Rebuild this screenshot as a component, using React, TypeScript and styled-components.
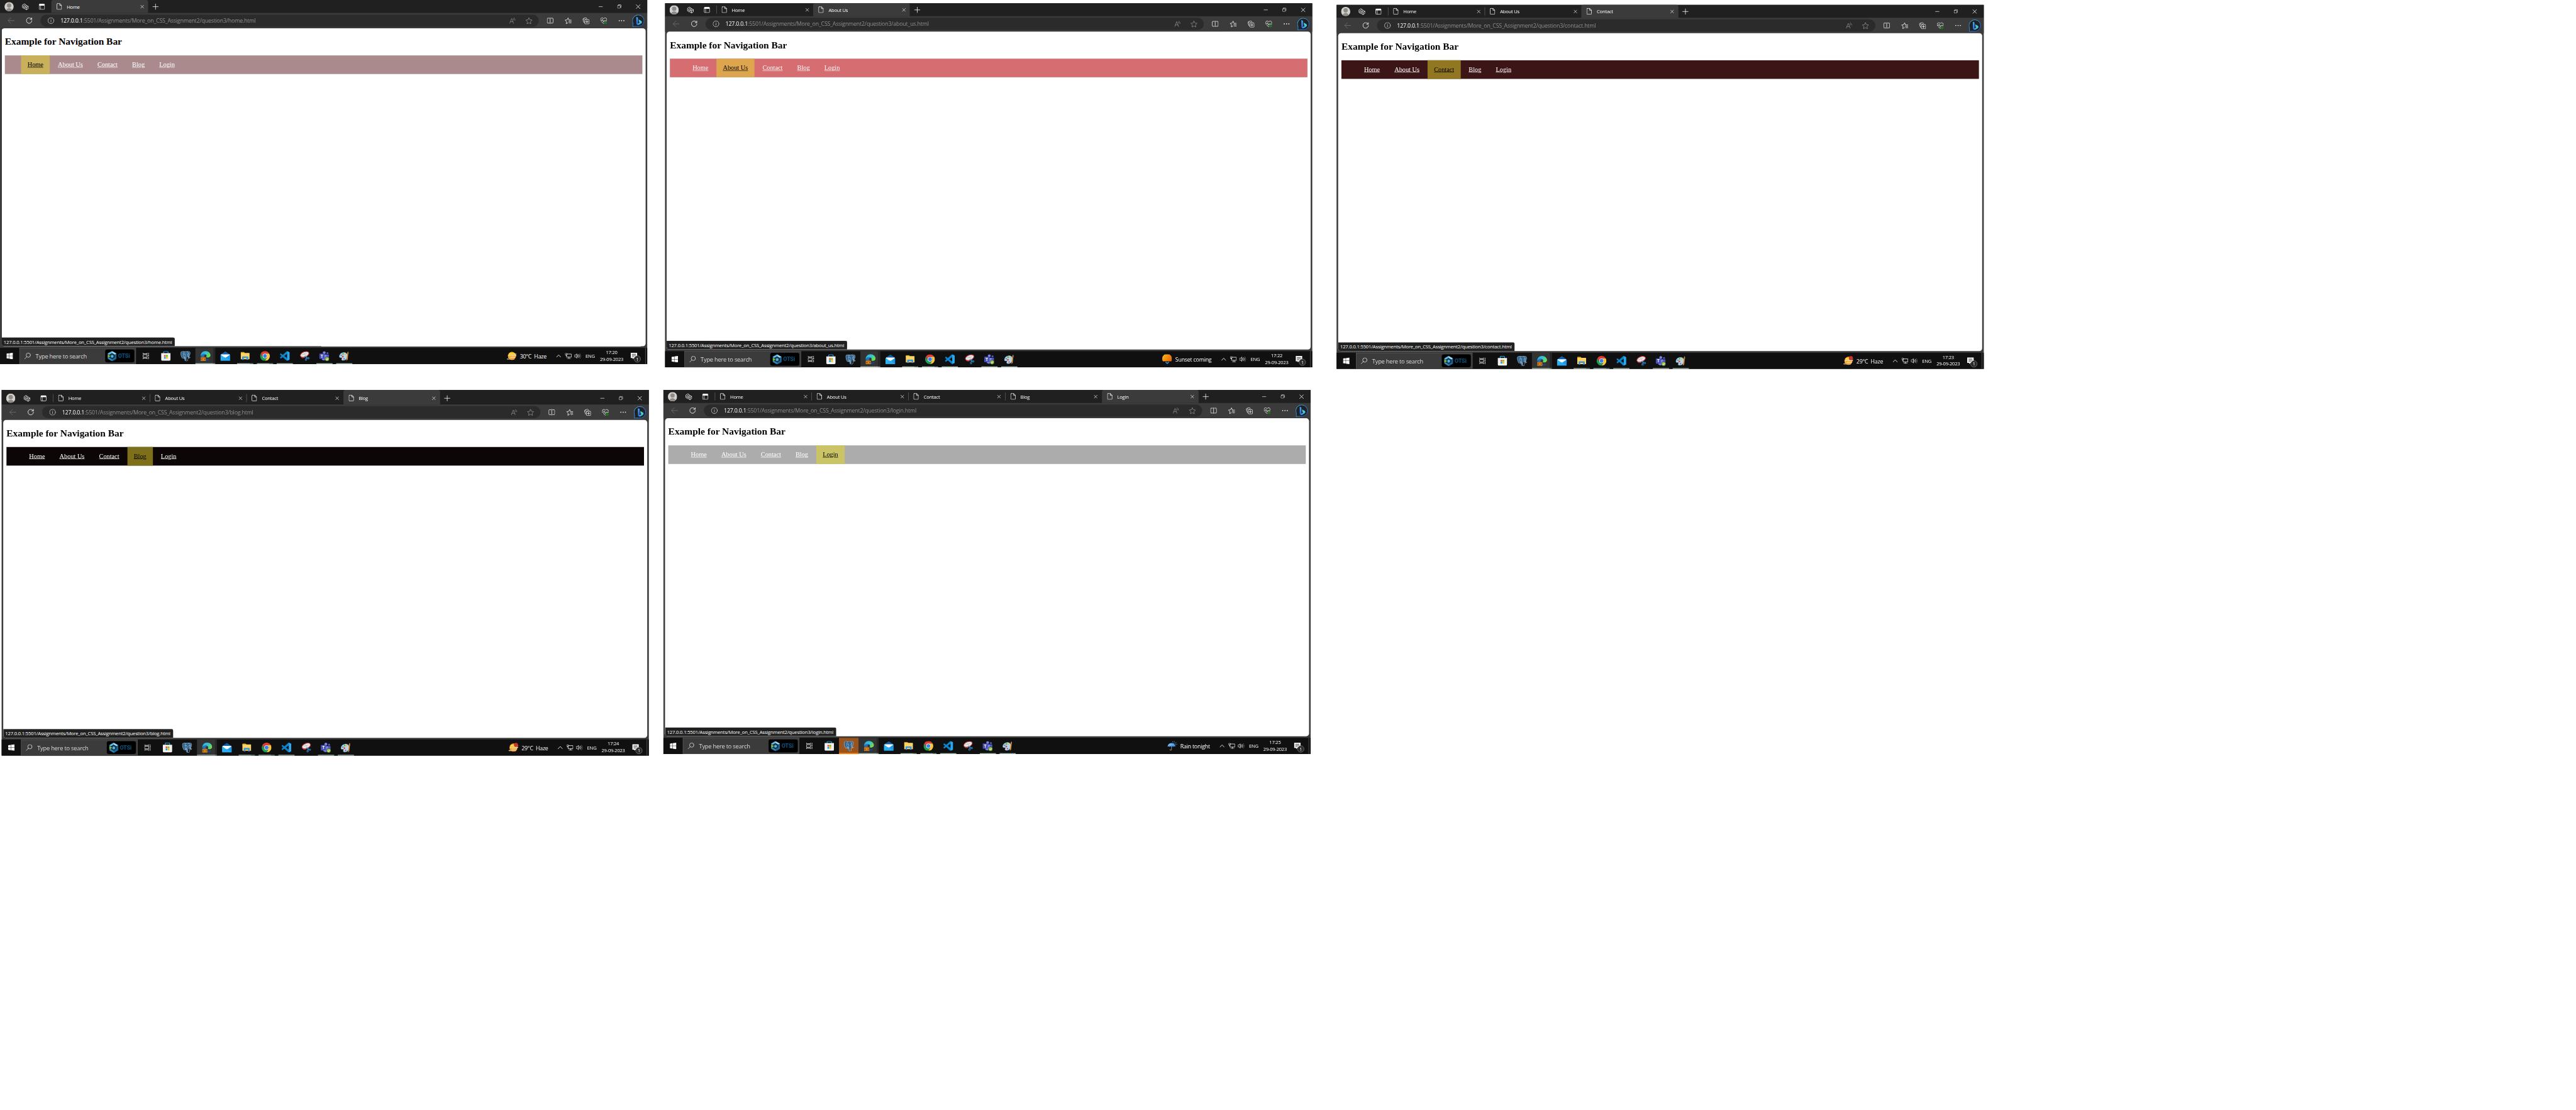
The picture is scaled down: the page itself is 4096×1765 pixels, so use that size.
import React from "react";
import styled, { createGlobalStyle, css } from "styled-components";
import { SiPostgresql } from "react-icons/si";

const UI = `"Open Sans", "Noto Sans", sans-serif`;

const GlobalStyle = createGlobalStyle`
  body { margin: 0; background: #fff; overflow: hidden; }
  * { box-sizing: border-box; }
  svg { display: block; flex: none; }
`;

const Viewport = styled.div`
  width: 4096px;
  height: 1765px;
  overflow: hidden;
  background: #fff;
`;

const Board = styled.main`
  width: 6368px;
  height: 2744px;
  transform: scale(0.64322);
  transform-origin: 0 0;
  display: flex;
  flex-direction: column;
  align-items: flex-start;
  gap: 52px;
  font-family: ${UI};
  letter-spacing: -0.02em;
`;

const ShotRow = styled.div<{ $left: number }>`
  display: flex;
  align-items: flex-start;
  padding-left: ${(p) => p.$left}px;
`;

const Shot = styled.section<{ $top: number; $left: number; $lead: number }>`
  width: 1600px;
  height: ${(p) => 900 + p.$lead}px;
  margin: ${(p) => p.$top}px 0 0 ${(p) => p.$left}px;
  display: flex;
  flex-direction: column;
  background: #3b3b3b;
`;

/* ---------- browser chrome ---------- */

const Slot = styled.div<{ $w: number }>`
  width: ${(p) => p.$w}px;
  height: 100%;
  flex: none;
  display: flex;
  align-items: center;
  justify-content: center;
`;

const TabStrip = styled.header<{ $lead: number }>`
  height: ${(p) => 32 + p.$lead}px;
  padding-top: ${(p) => p.$lead}px;
  flex: none;
  display: flex;
  align-items: stretch;
  background: #202020;
  box-shadow: inset 0 -1px 0 #1a1a1a;
`;

const TabItem = styled.div<{ $active: boolean; $lead: number }>`
  width: 239.2px;
  margin-top: ${(p) => -p.$lead}px;
  padding: ${(p) => p.$lead}px 0 0 13px;
  display: flex;
  align-items: center;
  color: #fff;
  font-size: 11.8px;
  background: ${(p) => (p.$active ? "#3b3b3b" : "transparent")};
  border-radius: ${(p) => (p.$active ? "5px 5px 0 0" : "0")};
  background-image: ${(p) =>
    p.$active ? "none" : "linear-gradient(#686868, #686868)"};
  background-size: 1px 20px;
  background-position: 0 ${(p) => 6 + p.$lead}px;
  background-repeat: no-repeat;
`;

const TabTitle = styled.span`
  flex: 1;
  padding: 0 0 1px 12px;
  white-space: nowrap;
`;

const Spacer = styled.div`
  flex: 1;
`;

const Toolbar = styled.div`
  height: 38px;
  flex: none;
  padding-right: 2px;
  display: flex;
  align-items: center;
  background: #3b3b3b;
`;

const AddressBar = styled.div`
  flex: 1;
  height: 30px;
  margin: 0 6px 0 11.5px;
  padding: 0 5px 0 18.5px;
  border-radius: 15px;
  background: #2b2b2b;
  display: flex;
  align-items: center;
`;

const Url = styled.div`
  flex: 1;
  padding-left: 15.5px;
  font-size: 13.75px;
  line-height: 18px;
  color: #8d8d8d;
  white-space: nowrap;
`;

const Host = styled.span`
  color: #fff;
`;

/* ---------- page ---------- */

const PageArea = styled.div`
  position: relative;
  flex: 1;
  margin: 0 4px 4px;
  padding: 0 8px;
  border-radius: 7px;
  background: #fff;
  font-family: "Liberation Serif", serif;
  letter-spacing: 0;
  color: #000;
  overflow: hidden;
`;

const Heading = styled.h2`
  margin: 20px 0;
  font-size: 24px;
  line-height: 27px;
  font-weight: 700;
`;

const NavBar = styled.nav<{ $bg: string }>`
  height: 46px;
  padding-left: 40px;
  display: flex;
  gap: 4px;
  background: ${(p) => p.$bg};
`;

const NavLink = styled.a<{ $hl?: string }>`
  padding: 0 16px;
  font-size: 16px;
  line-height: 46px;
  text-decoration: underline;
  color: ${(p) => (p.$hl ? "#000" : "#fff")};
  background: ${(p) => p.$hl || "transparent"};
`;

const StatusBubble = styled.div`
  position: absolute;
  left: 0;
  bottom: 0;
  height: 22px;
  padding: 0 7px 0 5px;
  border-radius: 0 4px 0 6px;
  border-top: 1px solid #35403b;
  background: #202020;
  color: #fff;
  font-family: ${UI};
  letter-spacing: -0.02em;
  font-size: 11.8px;
  line-height: 21px;
  white-space: nowrap;
`;

/* ---------- taskbar ---------- */

const Taskbar = styled.footer`
  height: 40px;
  flex: none;
  display: flex;
  align-items: stretch;
  background: #101010;
  color: #fff;
`;

const SearchBox = styled.div`
  width: 288px;
  display: flex;
  align-items: center;
  padding: 0 3px 0 11px;
  border: 1px solid #5c5c5c;
  border-bottom-color: #505050;
  background: #3b3b3b;
  color: #dcdcdc;
  font-size: 14.4px;
`;

const SearchText = styled.span`
  flex: 1;
  padding-left: 12px;
  white-space: nowrap;
`;

const SearchBadge = styled.div`
  width: 72px;
  height: 32px;
  border-radius: 5px;
  background: #000;
  display: flex;
  align-items: center;
  padding-left: 6px;
  gap: 4px;
  color: #0d4b72;
  font-family: Roboto, sans-serif;
  font-weight: 900;
  font-size: 14px;
`;

type AppState = "idle" | "open" | "stacked" | "active" | "alert";

const AppButton = styled.div<{ $state: AppState }>`
  width: 49px;
  height: 40px;
  display: flex;
  align-items: center;
  justify-content: center;
  background-repeat: no-repeat;
  ${(p) =>
    p.$state === "active" &&
    css`
      background-color: #333;
      background-image: linear-gradient(90deg, #a9c3b3 44px, #86a092 44px),
        linear-gradient(90deg, transparent 44px, #262626 44px);
      background-size: 100% 2px, 100% 100%;
      background-position: 0 100%, 0 0;
    `}
  ${(p) =>
    (p.$state === "open" || p.$state === "stacked") &&
    css`
      background-image: linear-gradient(
        90deg,
        #a9c3b3 31px,
        ${p.$state === "stacked" ? "#7b9386" : "#a9c3b3"} 31px
      );
      background-size: 40px 2px;
      background-position: 4.5px 100%;
    `}
  ${(p) =>
    p.$state === "alert" &&
    css`
      background-color: #99531d;
      background-image: linear-gradient(#ff7a00, #ff7a00);
      background-size: 100% 3px;
      background-position: 0 100%;
    `}
`;

const Weather = styled.div`
  display: flex;
  align-items: center;
  gap: 8px;
  padding-right: 18px;
  font-size: 13.7px;
  white-space: pre;
`;

const Language = styled(Slot)`
  font-size: 11.8px;
`;

const Clock = styled.div`
  width: 68px;
  display: flex;
  flex-direction: column;
  align-items: center;
  padding-top: 2px;
  font-size: 11.7px;
  line-height: 17px;
`;

const Notifications = styled(Slot)`
  position: relative;
`;

const Badge = styled.span`
  position: absolute;
  left: 21px;
  top: 19px;
  width: 17px;
  height: 17px;
  border-radius: 50%;
  border: 1px solid #8a8a8a;
  background: #2a2a2a;
  font-size: 11px;
  line-height: 15px;
  text-align: center;
`;

const ShowDesktop = styled.div`
  width: 5px;
  border-left: 1px solid #6e6e6e;
`;

/* ---------- icons ---------- */

type LineProps = { w?: number; h?: number; c?: string; s?: number; box?: string; children: React.ReactNode };
const Line = ({ w = 16, h = 16, c = "#fff", s = 1.2, box, children }: LineProps) => (
  <svg width={w} height={h} viewBox={box || `0 0 ${w} ${h}`} fill="none" stroke={c} strokeWidth={s} strokeLinecap="round" strokeLinejoin="round">
    {children}
  </svg>
);

const Avatar = () => (
  <svg width="23" height="23" viewBox="0 0 24 24">
    <defs><clipPath id="av"><circle cx="12" cy="12" r="12" /></clipPath></defs>
    <g clipPath="url(#av)">
      <rect width="24" height="24" fill="#d3d1ce" />
      <circle cx="12" cy="9" r="5.6" fill="#8f8b85" />
      <path d="M4 24c0-5 3.500-8 8-8s8 3 8 8z" fill="#8f8b85" />
    </g>
  </svg>
);

const Workspaces = () => (
  <Line w={17} h={17}>
    <path d="M8 8.500l4.500-2.500 3.500 2v5l-4.500 3-3.500-2z M8 8.500l3.500 2 4.500-2.500 M11.500 10.500v5.500" />
    <path d="M5.500 13.500l-1-.6V6.500L9 4l2.500 1.200 M2.500 11.500l-1-.6V4.500L6 1.500l2.700 1.300" />
  </Line>
);

const TabActions = () => (
  <svg width="15" height="15" viewBox="0 0 15 15">
    <rect x=".8" y=".8" width="13.400" height="13.400" rx="2" fill="none" stroke="#fff" strokeWidth="1.200" />
    <path d="M1 2.500a1.800 1.800 0 0 1 1.800-1.800h9.400a1.800 1.800 0 0 1 1.800 1.800v2.300H1z" fill="#fff" />
    <path d="M4.500 4v10" stroke="#fff" />
  </svg>
);

const PageIcon = () => (
  <Line w={13} h={16}>
    <path d="M2.200.7h5.600l4.400 4.500v8.600a1.500 1.500 0 0 1-1.500 1.500H2.200A1.500 1.500 0 0 1 .7 13.800V2.200A1.500 1.500 0 0 1 2.200.7z M7.700.9v4.400h4.300" />
  </Line>
);

const Close = ({ size = 9 }: { size?: number }) => (
  <Line w={size} h={size} box="0 0 9 9" s={1}><path d="M.5.5l8 8M8.500.5l-8 8" /></Line>
);
const Plus = () => <Line w={15} h={15}><path d="M7.500.5v14M.5 7.500h14" /></Line>;
const Minimize = () => <Line w={10} h={10} s={1}><path d="M0 5.500h10" /></Line>;
const Restore = () => (
  <Line w={10} h={10} s={1}>
    <rect x=".5" y="2.500" width="7" height="7" rx="1.500" />
    <path d="M2.700.5H7a2.500 2.500 0 0 1 2.500 2.500v4.300" />
  </Line>
);
const Back = () => <Line w={17} h={16} c="#757575"><path d="M16 8H1M8 1L1 8l7 7" /></Line>;
const Refresh = () => (
  <Line s={1.300}>
    <path d="M14.700 8A6.700 6.900 0 1 1 12.500 2.700L14.500 4.500M14.600.6v4.200h-4.200" />
  </Line>
);
const Info = () => (
  <Line c="#d6d6d6">
    <circle cx="8" cy="8" r="7.300" /><path d="M8 7.200v4.200M8 4.700v.2" />
  </Line>
);
const ReadAloud = () => (
  <Line c="#8b8b8b" w={16} h={16}>
    <path d="M1 14.700L5.800 2.500 10.500 14.700M2.500 10.700h6.600M9.500 3.500a5 5 0 0 1 1.500 3.300M11.200 1a8.500 8.500 0 0 1 3.300 6" />
  </Line>
);
const Star = () => (
  <Line c="#8b8b8b" w={17} h={17} box="0 0 16 16">
    <path d="M8 .8l2.200 4.700 5.100.7-3.700 3.600.9 5.200L8 12.500 3.500 15l.9-5.200L.7 6.200l5.100-.7z" />
  </Line>
);
const Split = () => (
  <Line w={16} h={16}>
    <path d="M8 .5v15M5.700 2H2A1.400 1.400 0 0 0 .7 3.400v9.200A1.400 1.400 0 0 0 2 14h3.700M10.300 2H14a1.400 1.400 0 0 1 1.300 1.400v9.200A1.400 1.400 0 0 1 14 14h-3.700" />
  </Line>
);
const Favorites = () => (
  <Line w={17} h={17}>
    <path d="M10.500 6.500L8.300 1.200 6 6l-5.200.8 3.800 3.600L3.700 15.700 8 13.300M11 6.700h5.300M10 10h6.300M11 13.300h5.300" />
  </Line>
);
const Collections = () => (
  <Line w={17} h={17}>
    <rect x="5.500" y="5.500" width="10.800" height="10.800" rx="2" />
    <path d="M10.900 8v5.800M8 10.900h5.800M3.600 12.500L.9 5.300A2 2 0 0 1 2 2.800L7.500.8a2 2 0 0 1 2.500 1l.5 1.500M3.600 3.900l-.4 1.600" />
  </Line>
);
const Essentials = () => (
  <svg width="17" height="17" viewBox="0 0 17 17" fill="none" stroke="#fff" strokeWidth="1.200" strokeLinejoin="round">
    <path d="M1.200 6.200C.3 3.500 2 1 4.600 1 6.300 1 7.500 2 8.300 3.200 9 2 10.300 1 12 1c2.600 0 4.300 2.500 3.500 5.200M.3 8h3.500l1.700-3 2.800 6.200L10.500 7.500l1 .8h5M3 10.300l5.300 5 1.200-1.200" />
    <circle cx="12.800" cy="13" r="3.700" fill="#1d7a22" stroke="none" />
    <path d="M11 13.300l1.200 1 2.200-2.500" stroke="#3b3b3b" strokeWidth=".8" />
  </svg>
);
const Dots = () => (
  <svg width="15" height="4" viewBox="0 0 15 4" fill="#fff">
    <circle cx="1.800" cy="2" r="1.300" /><circle cx="7.500" cy="2" r="1.300" /><circle cx="13.200" cy="2" r="1.300" />
  </svg>
);
const Bing = () => (
  <svg width="31" height="31" viewBox="0 0 31 31">
    <defs>
      <linearGradient id="bg1" x1="0" y1="0" x2="1" y2="1"><stop offset="0" stopColor="#45c4ee" /><stop offset="1" stopColor="#1c50d8" /></linearGradient>
      <linearGradient id="bg2" x1="0" y1="0" x2="0" y2="1"><stop offset="0" stopColor="#4fb5f2" /><stop offset="1" stopColor="#1b5ee8" /></linearGradient>
      <linearGradient id="bg3" x1="1" y1="0" x2="0" y2="1"><stop offset="0" stopColor="#4ee0c8" /><stop offset="1" stopColor="#3a9cf5" /></linearGradient>
    </defs>
    <path d="M15.500 1A14.300 14.300 0 1 1 12 29.300C8 28.800 4.500 29.500 1 30c1-2.500.8-6 .6-9A14.400 14.400 0 0 1 15.500 1z" fill="#1e2226" stroke="url(#bg1)" strokeWidth="1.500" />
    <path d="M10 5.500l4 2v13l-1 4.500-3-2.300z" fill="url(#bg2)" />
    <path d="M15.500 12l6 3.200c3 1.700 3 5 .3 6.700l-5 3.200c-2.600 1.200-5.500 0-6.100-2.700 1.200.8 2.200.8 3.600 0l4-2.300-1.500-1.900z" fill="url(#bg3)" />
  </svg>
);

const Windows = () => (
  <svg width="16" height="16" viewBox="0 0 16 16" fill="#fff">
    <path d="M0 2.300l6.500-.9v6.200H0zM7.300 1.300L16 0v7.600H7.300zM0 8.400h6.500v6.200L0 13.700zM7.300 8.400H16V16l-8.700-1.200z" />
  </svg>
);
const Search = () => <Line c="#e6e6e6" s={1.200}><circle cx="10" cy="6" r="5.300" /><path d="M6.300 9.800L.6 15.500" /></Line>;
const OtsiLogo = () => (
  <svg width="22" height="25" viewBox="0 0 22 25">
    <path d="M11 0l11 6.300v12.400L11 25 0 18.700V6.300z" fill="#2d86b8" />
    <path d="M11 0l11 6.300-4.500 2.500L11 5z" fill="#9ad8f2" />
    <path d="M11 0L0 6.300l4.500 2.500L11 5z" fill="#5fb9e2" />
    <path d="M22 6.300v12.400L11 25v-4.500l6.500-3.800V8.800z" fill="#1b6494" />
    <path d="M11 5.800l6 3.400v6.600l-6 3.400-6-3.400V9.200z" fill="#173a52" stroke="#03121c" strokeWidth="1.200" />
    <path d="M11 9l3.500 2v3.700L11 16.700l-3-2V11z" fill="#58aed6" />
    <path d="M0 7.500l8 5-8 5z" fill="#7fc241" stroke="#03121c" strokeWidth=".6" />
  </svg>
);
const TaskView = () => (
  <svg width="16" height="16" viewBox="0 0 16 16" fill="none" stroke="#fff" strokeWidth="1.200">
    <path d="M.6 0v2.600h10V0M.6 16v-2.600h10V16M.6 4.800h10v6.400H.6zM14.200 0v4M14.200 9v7" />
    <rect x="13.200" y="5" width="2" height="2.600" fill="#fff" stroke="none" />
  </svg>
);
const Store = () => (
  <svg width="24" height="24" viewBox="0 0 24 24">
    <path d="M6.500 6V2.500A1.800 1.800 0 0 1 8.300.7h7.400a1.800 1.800 0 0 1 1.800 1.800V6" fill="none" stroke="#1aa7ea" strokeWidth="1.700" />
    <path d="M.5 5h23v16a3 3 0 0 1-3 3h-17a3 3 0 0 1-3-3z" fill="#f1f1f1" />
    <path d="M7.500 9.500h4.200v4.200H7.500z" fill="#f25022" /><path d="M12.500 9.500h4.200v4.200h-4.200z" fill="#7fba00" />
    <path d="M7.500 14.500h4.200v4.200H7.500z" fill="#00a4ef" /><path d="M12.500 14.500h4.200v4.200h-4.200z" fill="#ffb900" />
  </svg>
);
const PgWrap = styled.div`
  display: grid;
  > * { grid-area: 1 / 1; }
`;
const Postgres = () => (
  <PgWrap>
    <svg width="25" height="25" viewBox="0 0 24 24">
      <path d="M4.500.8C1.500 1.300.4 4 .8 7.500c.4 3.500 2 8 3.600 8.500 1 .3 1.500-.5 2.300-1.300l2 .6.600 6c.5 2.500 4.500 2.400 5.300 0l.6-6.600 4.500.3c2-.4 3.200-1.200 3.300-2l-2.500-.3c2-3 3-7.500 2-9.500C20.500.7 17 .3 14.500 1.200 11 .4 8 0 4.500.8z" fill="#336791" />
    </svg>
    <SiPostgresql size={25} color="#b9cede" />
  </PgWrap>
);
const Edge = () => (
  <svg width="26" height="26" viewBox="0 0 26 26">
    <defs>
      <linearGradient id="ed1" x1="0" y1="0" x2="1" y2=".5"><stop offset="0" stopColor="#2fa8e0" /><stop offset=".55" stopColor="#35c1d8" /><stop offset="1" stopColor="#6be04b" /></linearGradient>
      <linearGradient id="ed2" x1="0" y1="0" x2="0" y2="1"><stop offset="0" stopColor="#1b86d8" /><stop offset="1" stopColor="#0d3f86" /></linearGradient>
    </defs>
    <path d="M1 13C1 6 6 .8 13 .8S25.300 6 25.300 11c0 3.800-3 6-6.300 6-2.500 0-4.500-.9-4-2 .9-1.300 1-3 .2-4.300C12 6.500 4 7.500 1 13z" fill="url(#ed1)" />
    <path d="M1 13C3.500 7.500 10 6.300 14 9.300 9.500 9.500 8 14 10 17.500c2.300 4 8.500 4.700 13.700 2.400-2 3.500-6 5.600-10.500 5.600C6 25.500 1 20 1 13z" fill="url(#ed2)" />
    <rect x="1" y="16.500" width="13" height="9" rx="1" fill="#c9761a" /><path d="M1 20.500h13v1H1z" fill="#7a430c" />
    <path d="M5 16.500V14.700h5v1.800" fill="none" stroke="#b06512" strokeWidth="1.300" /><path d="M6.700 20h1.700v2.500H6.700z" fill="#ffc85a" />
  </svg>
);
const Mail = () => (
  <svg width="24" height="24" viewBox="0 0 24 24">
    <path d="M0 8.500L12 .5l12 8V24H0z" fill="#0f5fa8" /><path d="M1.500 8h21v10h-21z" fill="#fff" />
    <path d="M0 8.500L12 17 0 24z" fill="#2cb3f3" /><path d="M24 8.500L12 17l12 7z" fill="#1a97e6" />
    <path d="M0 24l10-9 2 1.500 2-1.500 10 9z" fill="#29a9ee" />
  </svg>
);
const Files = () => (
  <svg width="22" height="20" viewBox="0 0 22 20">
    <path d="M0 1a1 1 0 0 1 1-1h7l2 2v3H0z" fill="#e8a310" /><path d="M0 2.500h21a1 1 0 0 1 1 1V18H0z" fill="#fdd461" />
    <path d="M3.500 19.500v-7a1.500 1.500 0 0 1 1.500-1.500h12a1.500 1.500 0 0 1 1.500 1.500v7h-4V15h-7v4.500z" fill="#3f94dc" />
  </svg>
);
const Chrome = () => (
  <svg width="24" height="24" viewBox="0 0 24 24">
    <path d="M12 6h10.400A12 12 0 0 0 1.600 6l5.200 9A6 6 0 0 1 12 6z" fill="#e33b2e" />
    <path d="M12 6h10.400A12 12 0 0 1 12 24l5.200-9A6 6 0 0 0 12 6z" fill="#fcc934" />
    <path d="M17.200 15L12 24A12 12 0 0 1 1.600 6l5.200 9a6 6 0 0 0 10.400 0z" fill="#1f9d50" />
    <circle cx="12" cy="12" r="5.900" fill="#fff" /><circle cx="12" cy="12" r="4.600" fill="#3c7ee8" />
  </svg>
);
const VsCode = () => (
  <svg width="24" height="24" viewBox="0 0 24 24">
    <path fill="#0a84cb" d="M23.150 2.587L18.210.21a1.494 1.494 0 0 0-1.705.29l-9.460 8.630-4.120-3.128a.999.999 0 0 0-1.276.057L.327 7.261A1 1 0 0 0 .326 8.740L3.899 12 .326 15.260a1 1 0 0 0 .001 1.479L1.650 17.940a.999.999 0 0 0 1.276.057l4.120-3.128 9.460 8.630a1.492 1.492 0 0 0 1.704.290l4.942-2.377A1.500 1.500 0 0 0 24 20.060V3.939a1.500 1.500 0 0 0-.85-1.352zm-5.146 14.861L10.826 12l7.178-5.448v10.896z" />
    <path fill="#2aa9f0" d="M18 .2l5.200 2.400a1.500 1.500 0 0 1 .8 1.300v16.200a1.500 1.500 0 0 1-.8 1.300L18 23.800z" />
  </svg>
);
const Snip = () => (
  <svg width="24" height="24" viewBox="0 0 24 24">
    <ellipse cx="12" cy="8" rx="11" ry="6.200" transform="rotate(-22 12 8)" fill="#e9e9e9" stroke="#cf3b3b" strokeWidth="1.600" />
    <path d="M5 9l12-3M10 5l6 8" stroke="#b5b5b5" strokeWidth="1.200" />
    <path d="M3 14c2 3 6 3.500 10 1" fill="none" stroke="#d84848" strokeWidth="1.500" />
    <g fill="none" stroke="#2e86c4" strokeWidth="1.700"><path d="M12 12.500l7 5M17.500 12l-1.500 7" /><ellipse cx="21" cy="17.300" rx="2" ry="1.800" /><ellipse cx="15.500" cy="21" rx="1.800" ry="2.200" /></g>
  </svg>
);
const TeamsLetter = styled.span`
  position: absolute;
  left: 0;
  top: 6px;
  width: 13px;
  color: #fff;
  font: 700 10px/13px ${UI};
  text-align: center;
`;
const TeamsWrap = styled.div`
  position: relative;
`;
const Teams = () => (
  <TeamsWrap>
    <svg width="25" height="25" viewBox="0 0 25 25">
      <circle cx="12.500" cy="3.700" r="3.500" fill="#7b83eb" /><circle cx="20.500" cy="5" r="2.500" fill="#5059c9" />
      <path d="M16 8.500h8v7a4 4 0 0 1-8 0z" fill="#5059c9" /><path d="M6 8.500h12V17a6 6 0 0 1-12 0z" fill="#7b83eb" />
      <rect y="6" width="13" height="13" rx="1.200" fill="#4a50b8" />
      <circle cx="19.500" cy="19.500" r="5.300" fill="#92c353" stroke="#101010" strokeWidth=".8" /><path d="M16.800 19.700l2 2 3.500-3.800" stroke="#fff" strokeWidth="1.500" fill="none" />
    </svg>
    <TeamsLetter>T</TeamsLetter>
  </TeamsWrap>
);
const Paint = () => (
  <svg width="25" height="25" viewBox="0 0 25 25">
    <path d="M10.500 3.500C17 2.500 21.500 6.500 21 12.500c-.5 6-4.500 10.500-10.500 10.500-4 0-5-2-3.500-4.500 1.200-2-.5-2.800-2.500-2.300C1.700 16.800.5 15 1 12c.8-4.500 4.500-7.800 9.500-8.500z" fill="#b9d6e6" stroke="#7fa9c0" strokeWidth=".7" />
    <circle cx="5.500" cy="10.500" r="2" fill="#3c9ee0" /><circle cx="10" cy="7" r="2" fill="#49b04f" /><circle cx="15" cy="7.500" r="1.800" fill="#e6c229" />
    <circle cx="9.500" cy="13.500" r="2.200" fill="#e04a3c" /><circle cx="12.500" cy="19" r="1.700" fill="#7852b5" />
    <path d="M20.500 7.500h2.400L21.500 21l-3.500 3z" fill="#d98a2f" /><path d="M20.200 8c-.5-3 .6-5.500 2.300-7.500 1.300 2 1.500 5 .6 7.500z" fill="#b9814c" />
  </svg>
);

const HazeIcon = ({ alert = false }: { alert?: boolean }) => (
  <svg width="24" height="28" viewBox="0 0 24 28">
    <defs><linearGradient id="hz" x1="0" y1="0" x2="0" y2="1"><stop offset="0" stopColor="#ffc400" /><stop offset="1" stopColor="#f0760c" /></linearGradient></defs>
    <circle cx="12.500" cy="14" r="10" fill="url(#hz)" />
    <g strokeWidth="2" strokeLinecap="round"><path d="M6 9.500h17" stroke="#fff1c9" /><path d="M4 13.500h10M4 17.500h1" stroke="#ffe9b0" /><path d="M13 13.500h10M8 17.500h12" stroke="#fff1c9" /><path d="M1 21.500h17" stroke="#e9cf94" /></g>
    {alert && <circle cx="18.500" cy="7.500" r="5" fill="#c9372c" />}
  </svg>
);
const SunsetIcon = () => (
  <svg width="24" height="24" viewBox="0 0 24 24">
    <defs><linearGradient id="ss" x1="0" y1="0" x2="1" y2=".6"><stop offset="0" stopColor="#ffc01a" /><stop offset="1" stopColor="#ec6a08" /></linearGradient></defs>
    <path d="M1.800 17A12 12 0 1 1 22.200 17z" fill="url(#ss)" />
    <path d="M8.500 19l4 3.500 4-3.500" fill="none" stroke="#1f93e6" strokeWidth="2.600" />
  </svg>
);
const RainIcon = () => (
  <svg width="24" height="24" viewBox="0 0 24 24">
    <defs><linearGradient id="rn" x1="0" y1="0" x2="1" y2="1"><stop offset="0" stopColor="#8fd0ff" /><stop offset="1" stopColor="#2d7fd3" /></linearGradient></defs>
    <path d="M10 11v9.500a2 2 0 0 1-4 0" fill="none" stroke="#7c7c7c" strokeWidth="1.800" />
    <path d="M0 14C1 8 5 5.300 10 5.300s9 2.700 10 8.700c-1.500-1.500-3.500-1.500-5 0-1.500-1.500-3.500-1.500-5 0-1.500-1.500-3.500-1.500-5 0-1.500-1.500-3.500-1.500-5 0z" fill="url(#rn)" />
    <path d="M13 1.200l-.8 1.300M17 .8l-.8 1.300M16.800 4.500l-.8 1.300M21 4l-.8 1.300M20 8l-.8 1.300M23.500 7.500l-.8 1.300" stroke="#4aa6ee" strokeWidth="1.500" strokeLinecap="round" />
  </svg>
);
const Chevron = () => <Line w={12} h={8} s={1.300}><path d="M.7 7L6 1.400 11.300 7" /></Line>;
const Network = () => (
  <Line w={16} h={14}>
    <path d="M5 2.200h10.400v7.600H3.500V6M.5.5h4v3.800h-4zM2.500 4.300V6h1M9.500 10v3.300M5.500 13.400h8" />
  </Line>
);
const Volume = () => (
  <Line w={17} h={14}>
    <path d="M.6 4.700h2.200L6 1.700v10.600L2.800 9.300H.6zM8.200 4.800a3.500 3.500 0 0 1 0 4.400M10.700 3a6 6 0 0 1 0 8" />
    <path d="M13.300 1a9 9 0 0 1 0 12" stroke="#777" />
  </Line>
);
const Message = () => (
  <svg width="24" height="24" viewBox="0 0 24 24">
    <path d="M0 4h16v13H8l-3 3v-3H0z" fill="#fff" /><path d="M3 7.600h10M3 10.500h10M3 13.400h6" stroke="#101010" strokeWidth="1.100" />
  </svg>
);

/* ---------- content ---------- */

const PAGES = ["Home", "About Us", "Contact", "Blog", "Login"];

type Capture = {
  active: number;
  file: string;
  bar: string;
  highlight: string;
  weather: string;
  icon: React.ReactNode;
  time: string;
  alert?: boolean;
  lead?: number;
  top: number;
  left: number;
};

const CAPTURES: Capture[][] = [
  [
    { active: 0, file: "home", bar: "#aa8a8c", highlight: "#c9b15c", weather: "30°C  Haze", icon: <HazeIcon />, time: "17:20", top: 0, left: 0 },
    { active: 1, file: "about_us", bar: "#d66d70", highlight: "#dea54f", weather: "Sunset coming", icon: <SunsetIcon />, time: "17:22", top: 8, left: 44 },
    { active: 2, file: "contact", bar: "#3c1517", highlight: "#917722", weather: "29°C  Haze", icon: <HazeIcon alert />, time: "17:23", top: 12, left: 60 },
  ],
  [
    { active: 3, file: "blog", bar: "#0c0607", highlight: "#7e6f1b", weather: "29°C  Haze", icon: <HazeIcon alert />, time: "17:24", lead: 4, top: 0, left: 0 },
    { active: 4, file: "login", bar: "#acacac", highlight: "#cbc466", weather: "Rain tonight", icon: <RainIcon />, time: "17:25", alert: true, top: 0, left: 36 },
  ],
];

const APPS: { icon: React.ReactNode; state: AppState }[] = [
  { icon: <TaskView />, state: "idle" },
  { icon: <Store />, state: "idle" },
  { icon: <Postgres />, state: "idle" },
  { icon: <Edge />, state: "active" },
  { icon: <Mail />, state: "idle" },
  { icon: <Files />, state: "stacked" },
  { icon: <Chrome />, state: "stacked" },
  { icon: <VsCode />, state: "open" },
  { icon: <Snip />, state: "idle" },
  { icon: <Teams />, state: "open" },
  { icon: <Paint />, state: "open" },
];

const BrowserShot = ({ c }: { c: Capture }) => {
  const path = `:5501/Assignments/More_on_CSS_Assignment2/question3/${c.file}.html`;
  const lead = c.lead || 0;
  return (
    <Shot $top={c.top} $left={c.left} $lead={lead}>
      <TabStrip $lead={lead}>
        <Slot $w={44}><Avatar /></Slot>
        <Slot $w={36}><Workspaces /></Slot>
        <Slot $w={47}><TabActions /></Slot>
        {PAGES.slice(0, c.active + 1).map((title, i) => (
          <TabItem key={title} $active={i === c.active} $lead={lead}>
            <PageIcon />
            <TabTitle>{title}</TabTitle>
            <Slot $w={30}><Close /></Slot>
          </TabItem>
        ))}
        <Slot $w={36}><Plus /></Slot>
        <Spacer />
        <Slot $w={46}><Minimize /></Slot>
        <Slot $w={46}><Restore /></Slot>
        <Slot $w={46}><Close size={11} /></Slot>
      </TabStrip>
      <Toolbar>
        <Slot $w={55}><Back /></Slot>
        <Slot $w={33}><Refresh /></Slot>
        <AddressBar>
          <Info />
          <Url><Host>127.0.0.1</Host>{path}</Url>
          <Slot $w={39.5}><ReadAloud /></Slot>
          <Slot $w={40}><Star /></Slot>
        </AddressBar>
        <Slot $w={44}><Split /></Slot>
        <Slot $w={44}><Favorites /></Slot>
        <Slot $w={44}><Collections /></Slot>
        <Slot $w={44}><Essentials /></Slot>
        <Slot $w={44}><Dots /></Slot>
        <Slot $w={40}><Bing /></Slot>
      </Toolbar>
      <PageArea>
        <Heading>Example for Navigation Bar</Heading>
        <NavBar $bg={c.bar}>
          {PAGES.map((title, i) => (
            <NavLink key={title} $hl={i === c.active ? c.highlight : undefined}>{title}</NavLink>
          ))}
        </NavBar>
        <StatusBubble>127.0.0.1{path}</StatusBubble>
      </PageArea>
      <Taskbar>
        <Slot $w={48}><Windows /></Slot>
        <SearchBox>
          <Search />
          <SearchText>Type here to search</SearchText>
          <SearchBadge><OtsiLogo />OTSi</SearchBadge>
        </SearchBox>
        {APPS.map((app, i) => (
          <AppButton key={i} $state={c.alert && i === 2 ? "alert" : app.state}>{app.icon}</AppButton>
        ))}
        <Spacer />
        <Weather>{c.icon}{c.weather}</Weather>
        <Slot $w={24}><Chevron /></Slot>
        <Slot $w={24}><Network /></Slot>
        <Slot $w={23}><Volume /></Slot>
        <Language $w={38}>ENG</Language>
        <Clock><span>{c.time}</span><span>29-09-2023</span></Clock>
        <Notifications $w={49}><Message /><Badge>1</Badge></Notifications>
        <ShowDesktop />
      </Taskbar>
    </Shot>
  );
};

export default function App() {
  return (
    <Viewport>
      <GlobalStyle />
      <Board>
        {CAPTURES.map((row, i) => (
          <ShotRow key={i} $left={i === 0 ? 0 : 4}>
            {row.map((c) => <BrowserShot key={c.file} c={c} />)}
          </ShotRow>
        ))}
      </Board>
    </Viewport>
  );
}
